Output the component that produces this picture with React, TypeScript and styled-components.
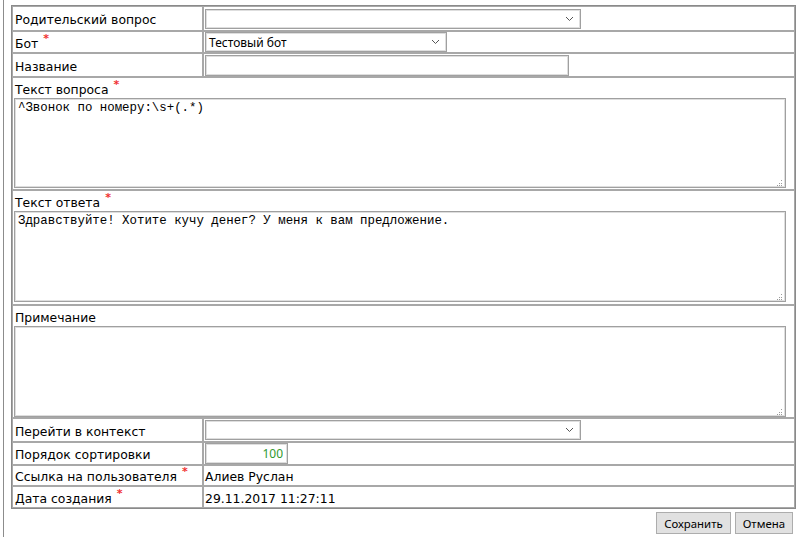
import React from "react";
import styled, { createGlobalStyle } from "styled-components";

const GlobalStyle = createGlobalStyle`
  html, body {
    margin: 0;
    padding: 0;
    background: #ffffff;
  }
  body {
    font-family: "DejaVu Sans", Verdana, sans-serif;
    font-size: 12.4px;
    color: #000000;
  }
`;

const Page = styled.div`
  padding-left: 3px;
  height: 537px;
  box-sizing: border-box;
`;

const Frame = styled.div`
  height: 100%;
  box-sizing: border-box;
  border-left: 1px solid #8c8c8c;
  padding: 5px 0 0 7px;
`;

const FormTable = styled.table`
  width: 785px;
  table-layout: fixed;
  border: 1px solid #8a8a8a;
  border-collapse: separate;
  border-spacing: 0;
`;

const Cell = styled.td<{ $h: number }>`
  height: ${(p) => p.$h}px;
  box-sizing: border-box;
  border: 1px solid #a8a8a8;
  padding: 2px 1px 0 2px;
  vertical-align: middle;
  white-space: nowrap;
`;

const ValueCell = styled(Cell)`
  padding: 0 1px;
`;

const TextCell = styled(Cell)`
  padding: 2px 1px 0 1px;
`;

const WideCell = styled(Cell)`
  vertical-align: top;
  padding: 1px 1px 0 1px;
`;

const Required = styled.span`
  display: inline-block;
  margin-left: 5px;
  color: #f03030;
  font-size: 11px;
  font-weight: bold;
  position: relative;
  top: -6px;
`;

const BlockLabel = styled.div`
  line-height: 19px;
  padding: 1px 0 0 1px;
  height: 19px;
  box-sizing: border-box;
`;

const fieldBorder = `
  border: 1px solid #a0a0a0;
  box-shadow: inset 0 0 0 1px #dedede;
  background: #ffffff;
  box-sizing: border-box;
`;

const SelectBox = styled.div<{ $w: number }>`
  ${fieldBorder}
  width: ${(p) => p.$w}px;
  height: 20px;
  display: flex;
  align-items: center;
  padding: 0 6px 0 3px;
  font-family: "Noto Sans", "Open Sans", sans-serif;
  font-size: 12px;
`;

const SelectText = styled.span`
  flex: 1;
`;

const TextInput = styled.input<{ $w: number; $align?: string; $color?: string }>`
  ${fieldBorder}
  width: ${(p) => p.$w}px;
  height: 21px;
  margin: 0;
  padding: 0 4px;
  text-align: ${(p) => p.$align ?? "left"};
  color: ${(p) => p.$color ?? "#000"};
  font-family: "Noto Sans", "Open Sans", sans-serif;
  font-size: 12px;
  outline: none;
`;

/* wrapper carries the dotted resize grip in its corner */
const AreaWrap = styled.div`
  position: relative;
  width: 772px;

  &::after {
    content: "";
    position: absolute;
    right: 4px;
    bottom: 7px;
    width: 1px;
    height: 1px;
    background: #9a9a9a;
    box-shadow: -2px 3px 0 #9a9a9a, 0 3px 0 #9a9a9a, -4px 5px 0 #9a9a9a,
      -2px 5px 0 #9a9a9a, 0 5px 0 #9a9a9a;
  }
`;

const TextArea = styled.textarea<{ $h: number }>`
  ${fieldBorder}
  display: block;
  width: 772px;
  height: ${(p) => p.$h}px;
  margin: 0;
  padding: 2px 3px;
  resize: none;
  font-family: "Liberation Mono", "Courier New", monospace;
  font-size: 12.4px;
  line-height: 15px;
  color: #000;
  outline: none;
`;

const ButtonBar = styled.div`
  display: flex;
  justify-content: flex-end;
  gap: 4px;
  width: 782px;
  margin-top: 3px;
`;

const Button = styled.button`
  height: 22px;
  padding: 0 7px;
  background: #e1e1e1;
  border: 1px solid #adadad;
  font-family: "Noto Sans", "Open Sans", sans-serif;
  font-size: 11.4px;
  color: #000;
`;

const Chevron = () => (
  <svg width="9" height="6" viewBox="0 0 9 6">
    <polyline points="1,1 4.5,4.5 8,1" fill="none" stroke="#555" strokeWidth="1" />
  </svg>
);

const Select = ({ width, value }: { width: number; value?: string }) => (
  <SelectBox $w={width}>
    <SelectText>{value}</SelectText>
    <Chevron />
  </SelectBox>
);

const Area = ({ height, value }: { height: number; value: string }) => (
  <AreaWrap>
    <TextArea $h={height} defaultValue={value} />
  </AreaWrap>
);

const Req = () => <Required>*</Required>;

export default function App() {
  return (
    <Page>
      <GlobalStyle />
      <Frame>
        <FormTable>
          <colgroup>
            <col style={{ width: 191 }} />
            <col />
          </colgroup>
          <tbody>
            <tr>
              <Cell $h={25}>Родительский вопрос</Cell>
              <ValueCell $h={25}>
                <Select width={376} />
              </ValueCell>
            </tr>
            <tr>
              <Cell $h={22}>
                Бот
                <Req />
              </Cell>
              <ValueCell $h={22}>
                <Select width={242} value="Тестовый бот" />
              </ValueCell>
            </tr>
            <tr>
              <Cell $h={24}>Название</Cell>
              <ValueCell $h={24}>
                <TextInput $w={364} defaultValue="" />
              </ValueCell>
            </tr>
            <tr>
              <WideCell $h={113} colSpan={2}>
                <BlockLabel>
                  Текст вопроса
                  <Req />
                </BlockLabel>
                <Area height={90} value={"^Звонок по номеру:\\s+(.*)"} />
              </WideCell>
            </tr>
            <tr>
              <WideCell $h={115} colSpan={2}>
                <BlockLabel>
                  Текст ответа
                  <Req />
                </BlockLabel>
                <Area
                  height={91}
                  value="Здравствуйте! Хотите кучу денег? У меня к вам предложение."
                />
              </WideCell>
            </tr>
            <tr>
              <WideCell $h={113} colSpan={2}>
                <BlockLabel>Примечание</BlockLabel>
                <Area height={91} value="" />
              </WideCell>
            </tr>
            <tr>
              <Cell $h={24}>Перейти в контекст</Cell>
              <ValueCell $h={24}>
                <Select width={376} />
              </ValueCell>
            </tr>
            <tr>
              <Cell $h={23}>Порядок сортировки</Cell>
              <ValueCell $h={23}>
                <TextInput $w={83} $align="right" $color="#2f9a2f" defaultValue="100" />
              </ValueCell>
            </tr>
            <tr>
              <Cell $h={21}>
                Ссылка на пользователя
                <Req />
              </Cell>
              <TextCell $h={21}>Алиев Руслан</TextCell>
            </tr>
            <tr>
              <Cell $h={22}>
                Дата создания
                <Req />
              </Cell>
              <TextCell $h={22}>29.11.2017 11:27:11</TextCell>
            </tr>
          </tbody>
        </FormTable>
        <ButtonBar>
          <Button>Сохранить</Button>
          <Button>Отмена</Button>
        </ButtonBar>
      </Frame>
    </Page>
  );
}
